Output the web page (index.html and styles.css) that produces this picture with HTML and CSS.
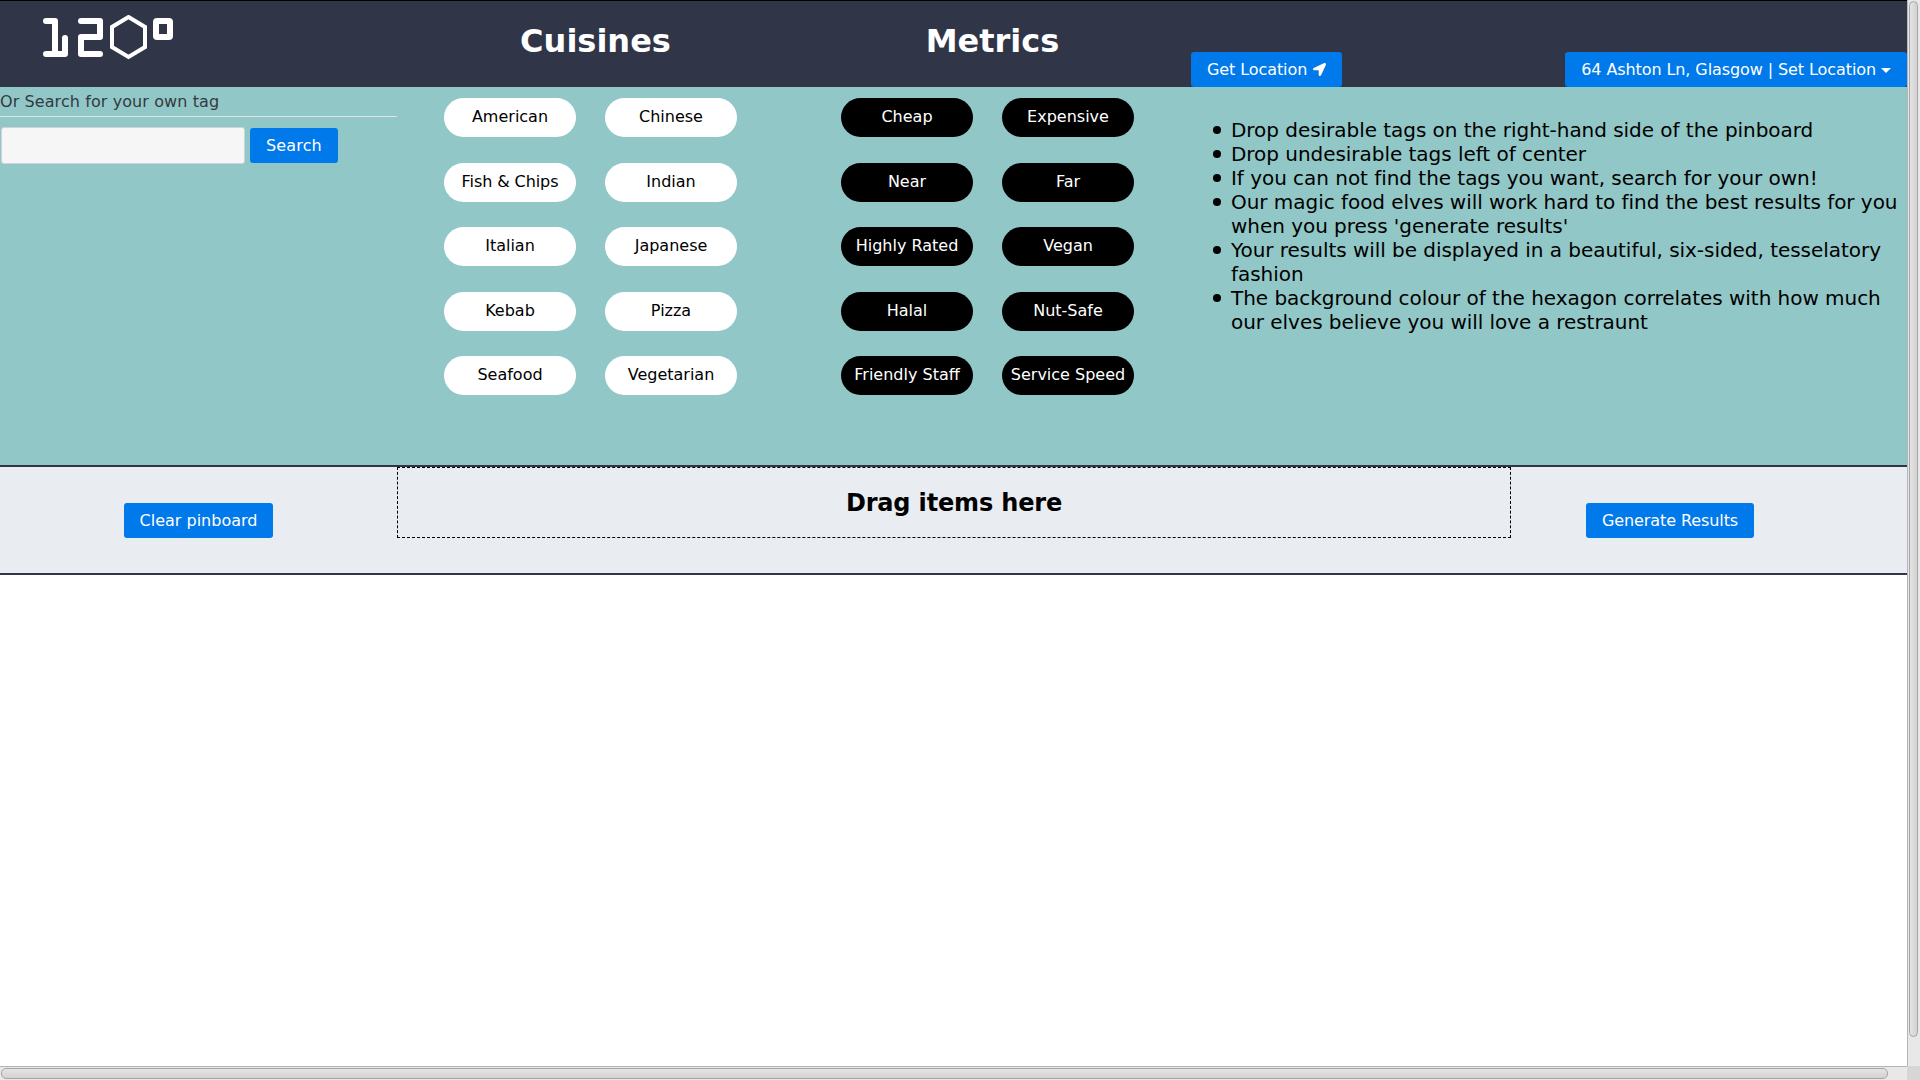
FILE: index.html
```html
<!DOCTYPE html>
<html>
    <head>
        <title>120 degrees</title>
        <link rel="stylesheet" href="styles.css">
    </head>
    <body>
        <div class="window">
            <div class="page">
                <nav class="navbar">
                    <div class="brand">
                        <svg class="logo" viewBox="0 0 135 46" width="135" height="46">
                            <g fill="none" stroke="#fff" stroke-width="6" stroke-linecap="round" stroke-linejoin="round">
                                <path d="M8 6H17V39"/>
                                <path d="M8 39H27V23"/>
                                <path d="M43 6H62V22H43V39H62"/>
                                <rect x="118" y="6" width="14" height="16" rx="1"/>
                            </g>
                            <polygon points="90.500,2 107,12 107,32 90.500,42 74,32 74,12" fill="none" stroke="#fff" stroke-width="4"/>
                        </svg>
                    </div>
                    <h2 class="nav-title">Cuisines</h2>
                    <h2 class="nav-title">Metrics</h2>
                    <div class="nav-actions">
                        <button class="btn tight">Get Location
                            <svg class="arrow" viewBox="0 0 512 512" width="13" height="13"><path fill="#fff" d="M444.52 3.52L28.74 195.42c-47.97 22.39-31.98 92.75 19.19 92.75h175.91v175.91c0 51.17 70.36 67.17 92.75 19.19l191.9-415.78c15.99-38.39-25.59-79.97-63.97-63.97z"/></svg>
                        </button>
                        <button class="btn tight">64 Ashton Ln, Glasgow | Set Location<span class="caret"></span></button>
                    </div>
                </nav>

                <section class="tags">
                    <div class="search-col">
                        <p class="search-label">Or Search for your own tag</p>
                        <hr class="search-rule">
                        <div class="search-row">
                            <input class="search-input" type="text">
                            <button class="btn wide">Search</button>
                        </div>
                    </div>
                    <div class="pill-col">
                        <span class="pill">American</span>
                        <span class="pill">Chinese</span>
                        <span class="pill tight">Fish &amp; Chips</span>
                        <span class="pill">Indian</span>
                        <span class="pill">Italian</span>
                        <span class="pill">Japanese</span>
                        <span class="pill">Kebab</span>
                        <span class="pill">Pizza</span>
                        <span class="pill">Seafood</span>
                        <span class="pill">Vegetarian</span>
                    </div>
                    <div class="pill-col">
                        <span class="pill dark">Cheap</span>
                        <span class="pill dark">Expensive</span>
                        <span class="pill dark">Near</span>
                        <span class="pill dark">Far</span>
                        <span class="pill dark">Highly Rated</span>
                        <span class="pill dark">Vegan</span>
                        <span class="pill dark">Halal</span>
                        <span class="pill dark">Nut-Safe</span>
                        <span class="pill dark">Friendly Staff</span>
                        <span class="pill dark">Service Speed</span>
                    </div>
                    <ul class="help">
                        <li>Drop desirable tags on the right-hand side of the pinboard</li>
                        <li>Drop undesirable tags left of center</li>
                        <li>If you can not find the tags you want, search for your own!</li>
                        <li>Our magic food elves will work hard to find the best results for you when you press 'generate results'</li>
                        <li>Your results will be displayed in a beautiful, six-sided, tesselatory fashion</li>
                        <li>The background colour of the hexagon correlates with how much our elves believe you will love a restraunt</li>
                    </ul>
                </section>

                <section class="pinboard">
                    <div class="pin-left"><button class="btn">Clear pinboard</button></div>
                    <div class="dropzone">Drag items here</div>
                    <div class="pin-right"><button class="btn tight">Generate Results</button></div>
                </section>
            </div>
            <div class="scroll-y"><div class="thumb-y"></div></div>
            <div class="scroll-x"><div class="thumb-x"></div></div>
            <div class="scroll-corner"></div>
        </div>
    </body>
</html>
```

FILE: styles.css
```css
* {
    box-sizing: border-box;
}

html,
body {
    height: 100%;
}

body {
    margin: 0;
    overflow: hidden;
    background: #fff;
    font-family: "DejaVu Sans", sans-serif;
    font-size: 16px;
}

.window {
    display: grid;
    grid-template-columns: 1fr 13px;
    grid-template-rows: 1fr 14px;
    height: 100%;
}

.page {
    min-width: 0;
    overflow: hidden;
}

.tight {
    letter-spacing: -0.09px;
}

.wide {
    letter-spacing: 0.15px;
}

/* navbar */
.navbar {
    display: grid;
    grid-template-columns: 397px 397px 397px 1fr;
    height: 87px;
    border-top: 1px solid #000;
    background: #303548;
}

.brand {
    padding: 14px 0 0 38px;
}

.logo {
    display: block;
}

.nav-title {
    margin: 0;
    padding-top: 21px;
    color: #fff;
    font-size: 32px;
    line-height: 38px;
    font-weight: bold;
    text-align: center;
}

.nav-actions {
    display: flex;
    justify-content: space-between;
    align-items: flex-end;
}

.btn {
    height: 35px;
    padding: 0 16px;
    border: 0;
    border-radius: 3px;
    background: #0079ea;
    color: #fff;
    font-family: inherit;
    font-size: 16px;
    white-space: nowrap;
}

.arrow {
    margin-left: 1px;
    vertical-align: -1px;
}

.caret {
    display: inline-block;
    margin-left: 5px;
    border-top: 5px solid #fff;
    border-left: 5px solid transparent;
    border-right: 5px solid transparent;
    vertical-align: 2px;
}

/* tag section */
.tags {
    display: grid;
    grid-template-columns: 397px 397px 397px 1fr;
    height: 378px;
    background: #92c7c7;
}

.search-label {
    margin: 0;
    padding-top: 5px;
    color: #343a40;
    line-height: 20px;
    letter-spacing: 0.09px;
}

.search-rule {
    margin: 4px 0 10px;
    border: 0;
    border-top: 1px solid #dfe5e5;
}

.search-row {
    display: flex;
    align-items: center;
    gap: 5px;
}

.search-input {
    width: 244px;
    height: 37px;
    margin-left: 1px;
    border: 1px solid #ced4da;
    border-radius: 3px;
    background: #f6f6f6;
}

.pill-col {
    display: grid;
    grid-template-columns: 132px 132px;
    grid-auto-rows: 39px;
    column-gap: 29px;
    row-gap: 25.5px;
    align-content: start;
    padding: 11px 0 0 47px;
}

.pill {
    display: flex;
    justify-content: center;
    align-items: center;
    padding-bottom: 2px;
    border-radius: 20px;
    background: #fff;
    color: #000;
    white-space: nowrap;
}

.pill.dark {
    background: #000;
    color: #fff;
}

.help {
    margin: 31px 0 0;
    padding: 0 0 0 40px;
    color: #000;
    font-size: 20px;
    line-height: 24px;
    letter-spacing: -0.04px;
    list-style: none;
}

.help li {
    position: relative;
}

.help li::before {
    content: "";
    position: absolute;
    left: -18px;
    top: 8px;
    width: 8px;
    height: 8px;
    border-radius: 50%;
    background: #000;
}

/* pinboard */
.pinboard {
    display: grid;
    grid-template-columns: 397px 1114px 1fr;
    height: 110px;
    border-top: 2px solid #303548;
    border-bottom: 2px solid #303548;
    background: #e9ecf1;
}

.pin-left {
    padding-top: 36px;
    text-align: center;
}

.pin-right {
    padding: 36px 78px 0 0;
    text-align: center;
}

.dropzone {
    height: 71px;
    padding-top: 21px;
    border: 1px dashed #000;
    color: #000;
    font-size: 24px;
    line-height: 28px;
    font-weight: bold;
    letter-spacing: -0.16px;
    text-align: center;
}

/* scrollbars */
.scroll-y {
    grid-row: 1;
    grid-column: 2;
    padding: 1px 2px 0 1px;
    border-left: 1px solid #b5b5b5;
    background: #e8e8e8;
}

.thumb-y {
    height: 1036px;
    border: 1px solid #a6a6a6;
    border-radius: 5px;
    background: linear-gradient(to right, #e4e4e4, #d2d2d2);
}

.scroll-x {
    grid-row: 2;
    grid-column: 1;
    padding: 1px 0 0 1px;
    border-top: 1px solid #b5b5b5;
    background: #e8e8e8;
}

.thumb-x {
    width: 1887px;
    height: 11px;
    border: 1px solid #a6a6a6;
    border-radius: 5px;
    background: linear-gradient(to bottom, #e4e4e4, #d2d2d2);
}

.scroll-corner {
    background: #d6d6d6;
}
```
